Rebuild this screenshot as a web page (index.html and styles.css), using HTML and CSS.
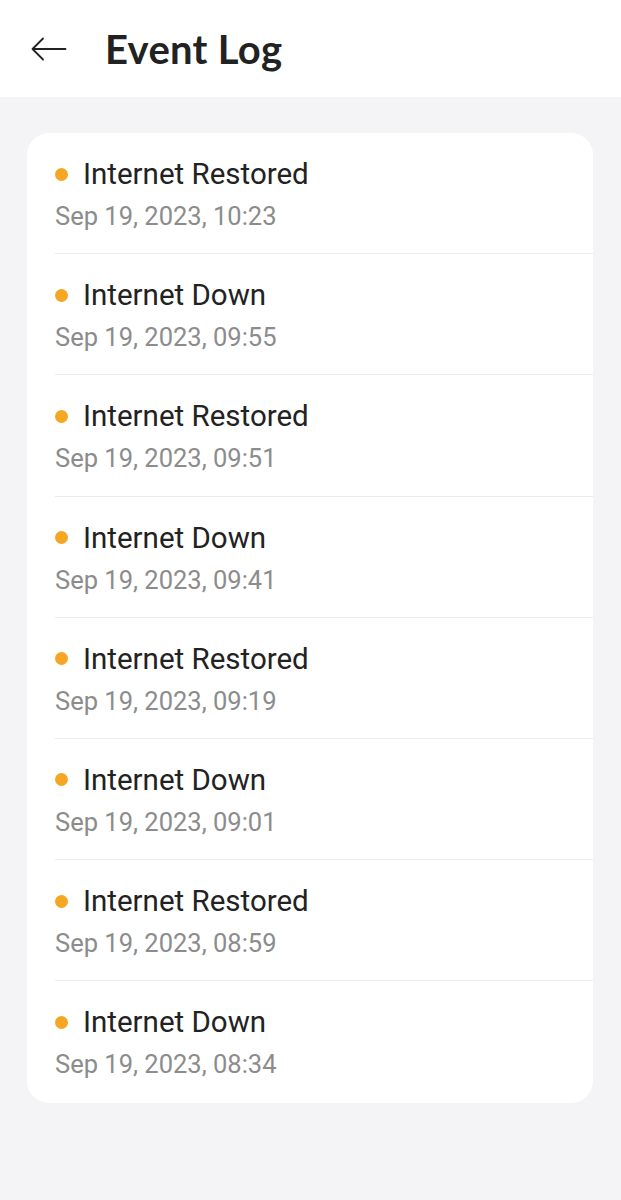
FILE: index.html
```html
<!DOCTYPE html>
<html>
<head>
<meta charset="utf-8">
<link rel="stylesheet" href="styles.css">
</head>
<body>
<header class="topbar">
  <svg class="back" width="36" height="24" viewBox="0 0 36 24"><path d="M1.5 12H34.5M1.5 12L12 1.5M1.5 12L12 22.5" fill="none" stroke="#222" stroke-width="1.8" stroke-linecap="round" stroke-linejoin="round"/></svg>
  <h1 class="title">Event Log</h1>
</header>
<main class="content">
  <ul class="card">
    <li class="row"><div class="name"><span class="dot"></span>Internet Restored</div><div class="time">Sep 19, 2023, 10:23</div></li>
    <li class="row"><div class="name"><span class="dot"></span>Internet Down</div><div class="time">Sep 19, 2023, 09:55</div></li>
    <li class="row"><div class="name"><span class="dot"></span>Internet Restored</div><div class="time">Sep 19, 2023, 09:51</div></li>
    <li class="row"><div class="name"><span class="dot"></span>Internet Down</div><div class="time">Sep 19, 2023, 09:41</div></li>
    <li class="row"><div class="name"><span class="dot"></span>Internet Restored</div><div class="time">Sep 19, 2023, 09:19</div></li>
    <li class="row"><div class="name"><span class="dot"></span>Internet Down</div><div class="time">Sep 19, 2023, 09:01</div></li>
    <li class="row"><div class="name"><span class="dot"></span>Internet Restored</div><div class="time">Sep 19, 2023, 08:59</div></li>
    <li class="row"><div class="name"><span class="dot"></span>Internet Down</div><div class="time">Sep 19, 2023, 08:34</div></li>
  </ul>
</main>
</body>
</html>
```
FILE: styles.css
```css
* { box-sizing: border-box; }
html, body { margin: 0; padding: 0; }
body {
  background: #f4f4f6;
  font-family: Roboto, "Noto Sans", sans-serif;
  width: 621px;
  min-height: 1200px;
}
.topbar {
  background: #fff;
  height: 97px;
  display: flex;
  align-items: center;
  padding-left: 31px;
  gap: 38px;
}
.back { display: block; }
.title {
  margin: 0;
  font-family: Lato, sans-serif;
  font-weight: 700;
  font-size: 40px;
  letter-spacing: 0.3px;
  color: #222;
}
.content { padding: 36px 28px 0 27px; }
.card {
  list-style: none;
  margin: 0;
  padding: 0 0 0 28px;
  background: #fff;
  border-radius: 22px;
  overflow: hidden;
}
.row {
  height: 121.2px;
  padding-top: 22px;
  border-bottom: 1px solid #ededed;
}
.row:last-child { border-bottom: none; }
.name {
  display: flex;
  align-items: center;
  font-size: 29.5px;
  color: #222;
  line-height: 38px;
}
.dot {
  width: 13px;
  height: 13px;
  border-radius: 50%;
  background: #f5a623;
  margin-right: 15px;
}
.time {
  font-size: 25.5px;
  color: #8c8c8c;
  line-height: 32px;
  margin-top: 7px;
}
```
